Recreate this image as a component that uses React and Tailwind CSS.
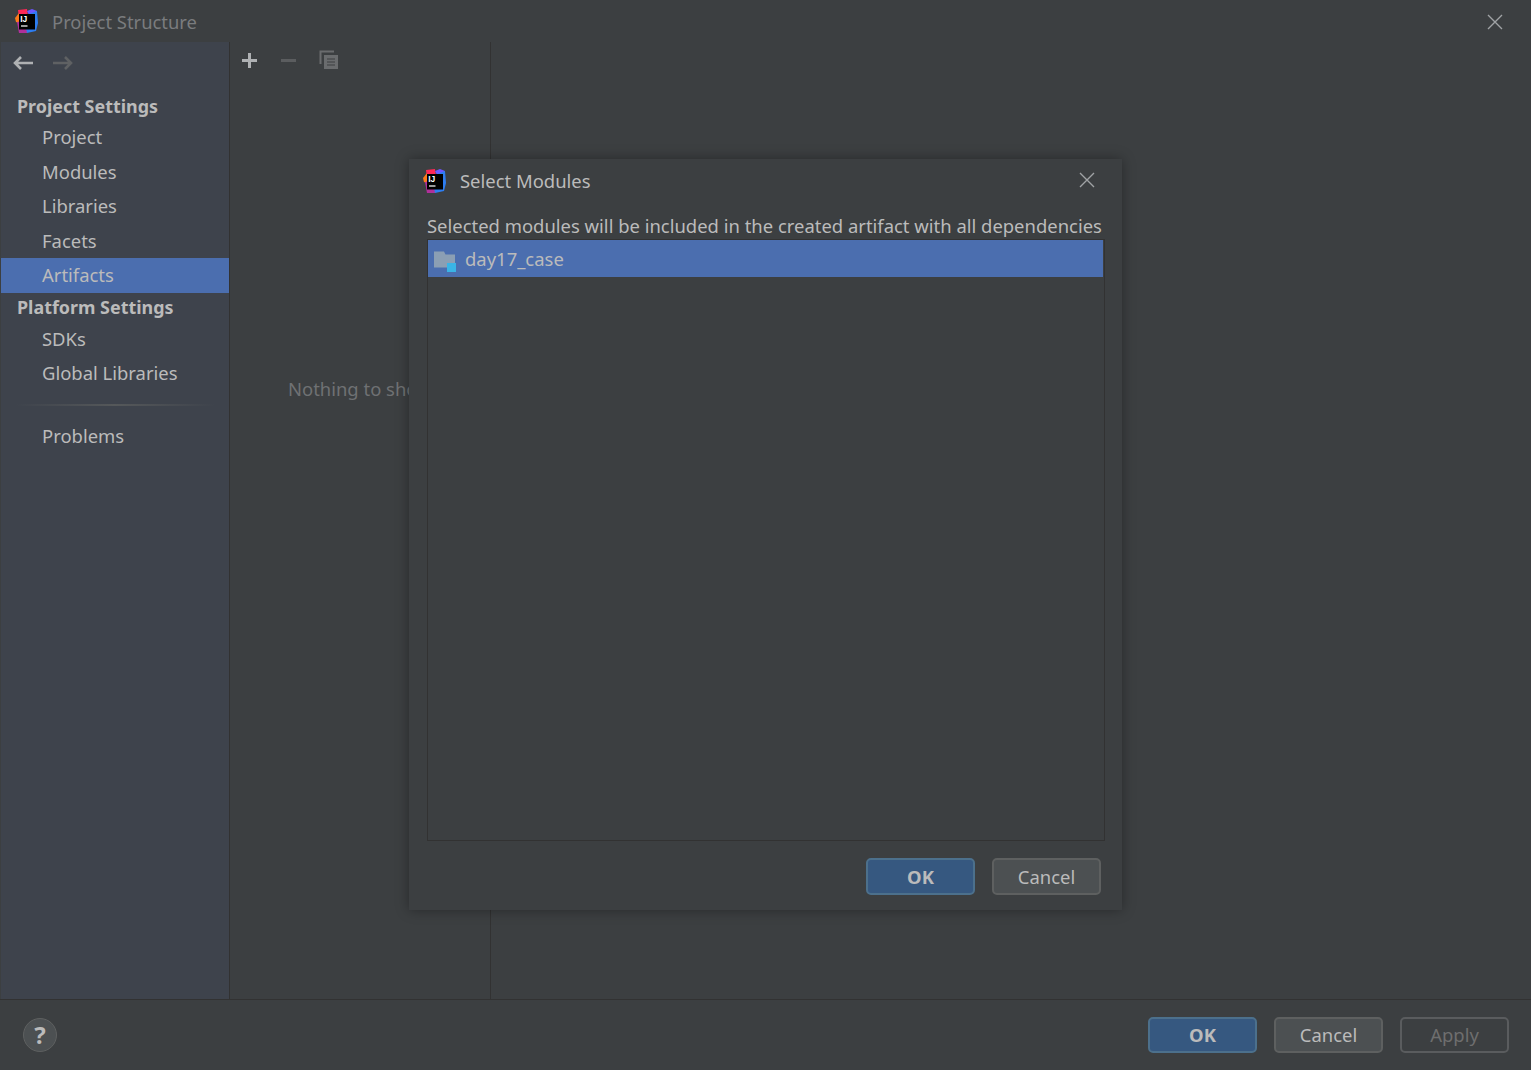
import React from "react";

function Logo() {
  return (
    <svg width="24" height="25" viewBox="0 0 24 25" className="block">
      <path d="M3 1 L12 0 L13 7 L4 9 Z" fill="#fe2857" />
      <path d="M0 9 L4 4 L6 15 L1 13 Z" fill="#fe7a1a" />
      <path d="M2 13 L8 12 L13 21 L12 24 L4 24 Z" fill="#b0309a" />
      <path d="M12 2 L17 0 L22 2 L21 6 L15 8 Z" fill="#6b57ff" />
      <path d="M14 5 L22 2 L23 14 L21 22 L12 24 L10 14 Z" fill="#2d7df0" />
      <rect x="4" y="5" width="16" height="15.5" fill="#000" />
      <text x="5.2" y="12.5" fill="#fff" fontSize="8.5" fontWeight="700" fontFamily="'Liberation Sans', sans-serif">IJ</text>
      <rect x="6" y="16.4" width="6.5" height="1.2" fill="#fff" />
    </svg>
  );
}

function Close({ className }) {
  return (
    <svg width="16" height="16" viewBox="0 0 16 16" className={className}>
      <path d="M1 1 L15 15 M15 1 L1 15" stroke="#a0a3a5" strokeWidth="1.4" fill="none" />
    </svg>
  );
}

function Arrow({ color, flip }) {
  return (
    <svg width="21" height="16" viewBox="0 0 21 16" className={flip ? "block -scale-x-100" : "block"}>
      <path d="M21 8 H3 M9 2 L3 8 L9 14" stroke={color} strokeWidth="2.6" fill="none" />
    </svg>
  );
}

function Btn({ children, kind }) {
  const cls =
    kind === "ok"
      ? "bg-[#365880] border-[#4c708c] text-[#bbbbbb] font-bold"
      : kind === "off"
      ? "bg-[#3c3f41] border-[#5a5c5e] text-[#6e6e6e]"
      : "bg-[#4c5052] border-[#5e6060] text-[#bbbbbb]";
  return (
    <div className={"w-[109px] h-[36.5px] rounded-[5px] border-2 flex items-center justify-center text-[18.45px] " + cls}>
      {children}
    </div>
  );
}

function Item({ children, selected }) {
  return (
    <div className={"h-[34.5px] pl-[41px] flex items-center text-[18.45px] text-[#bbbbbb] " + (selected ? "bg-[#4b6eaf]" : "")}>
      {children}
    </div>
  );
}

function Header({ children, className = "" }) {
  return <div className={"pl-[16px] flex items-center text-[17.9px] font-bold text-[#bbbbbb] " + className}>{children}</div>;
}

export default function App() {
  return (
    <div
      className="relative w-[1531px] h-[1070px] overflow-hidden bg-[#3c3f41] flex flex-col text-[#bbbbbb]"
      style={{ fontFamily: "'Noto Sans', 'Open Sans', sans-serif" }}
    >
      {/* Title bar */}
      <div className="h-[42px] shrink-0 flex items-center pl-[15px] pr-[28px] pt-[1px]">
        <Logo />
        <span className="ml-[13px] text-[18.4px] text-[#7a7c7e]">Project Structure</span>
        <Close className="ml-auto" />
      </div>

      {/* Main */}
      <div className="flex-1 flex min-h-0 border-b border-[#323232]">
        <div className="w-[229px] shrink-0 ml-px bg-[#3e434c] border-r border-[#323232] flex flex-col">
          <div className="h-[49px] shrink-0 flex items-center gap-[20px] pl-[11px] pb-[8px]">
            <Arrow color="#afb1b3" />
            <Arrow color="#5f6163" flip />
          </div>
          <Header className="h-[29px] pt-[2px]">Project Settings</Header>
          <Item>Project</Item>
          <Item>Modules</Item>
          <Item>Libraries</Item>
          <Item>Facets</Item>
          <Item selected>Artifacts</Item>
          <Header className="h-[28.6px] pt-[1px]">Platform Settings</Header>
          <Item>SDKs</Item>
          <Item>Global Libraries</Item>
          <div className="h-[28.6px] flex items-center px-[14px] pt-[1px]">
            <div className="h-[2px] w-full bg-gradient-to-r from-transparent via-[#55585a] to-transparent" />
          </div>
          <Item>Problems</Item>
        </div>

        <div className="w-[261px] shrink-0 border-r border-[#323232] flex flex-col">
          <div className="h-[36px] shrink-0 flex items-center pl-[11px] gap-[22px]">
            <svg width="17" height="17" viewBox="0 0 17 17" className="block">
              <path d="M8.5 1 V16 M1 8.5 H16" stroke="#afb1b3" strokeWidth="3" fill="none" />
            </svg>
            <svg width="17" height="17" viewBox="0 0 17 17" className="block">
              <path d="M1 8.5 H16" stroke="#5b5d5f" strokeWidth="3" fill="none" />
            </svg>
            <svg width="20" height="20" viewBox="0 0 20 20" className="block">
              <path d="M1.5 14 V1.5 H15" stroke="#6a6c6e" strokeWidth="2" fill="none" />
              <rect x="5" y="5" width="14" height="14" fill="#6a6c6e" />
              <path d="M8 9 H16 M8 12 H16 M8 15 H16" stroke="#3c3f41" strokeWidth="1.2" />
            </svg>
          </div>
          <div className="flex-1 flex items-center pl-[58px] pb-[300px] text-[18.45px] text-[#6f7173] whitespace-nowrap">
            Nothing to show
          </div>
        </div>
      </div>

      {/* Bottom bar */}
      <div className="h-[70px] shrink-0 flex items-center pl-[23px] pr-[22px] gap-[17px]">
        <div className="w-[34px] h-[34px] rounded-full bg-[#4c5052] border border-[#5e6060] flex items-center justify-center text-[24px] font-bold text-[#bbbbbb] mr-auto">
          ?
        </div>
        <Btn kind="ok">OK</Btn>
        <Btn>Cancel</Btn>
        <Btn kind="off">Apply</Btn>
      </div>

      {/* Dialog */}
      <div className="absolute left-[409px] top-[159px] w-[713px] h-[751px] bg-[#3c3f41] shadow-[0_0_12px_rgba(0,0,0,0.35)] flex flex-col px-[18px]">
        <div className="h-[44px] shrink-0 flex items-center -ml-[4px] pr-[1px]">
          <Logo />
          <span className="ml-[13px] text-[18.45px] text-[#bbbbbb]">Select Modules</span>
          <Close className="ml-auto mr-[8px] -mt-[2px]" />
        </div>
        <div className="h-[36px] shrink-0 flex items-end text-[18.45px] whitespace-nowrap text-[#bbbbbb]">
          <span className="-mb-[1px]">Selected modules will be included in the created artifact with all dependencies</span>
        </div>
        <div className="w-[678px] h-[602px] shrink-0 border border-[#323232]">
          <div className="h-[37px] mr-[1px] bg-[#4b6eaf] flex items-center pl-[5px] text-[18.45px] text-[#bbbbbb]">
            <svg width="24" height="26" viewBox="0 0 24 26" className="block mr-[8px]">
              <path d="M1 5.5 H11 L12.5 8.5 H22 V21.5 H1 Z" fill="#8b9fb4" />
              <rect x="14" y="17" width="9" height="9" fill="#3ab4e6" />
            </svg>
            day17_case
          </div>
        </div>
        <div className="flex-1 flex justify-end items-center gap-[17px] pr-[3px] pt-[2px]">
          <Btn kind="ok">OK</Btn>
          <Btn>Cancel</Btn>
        </div>
      </div>
    </div>
  );
}
